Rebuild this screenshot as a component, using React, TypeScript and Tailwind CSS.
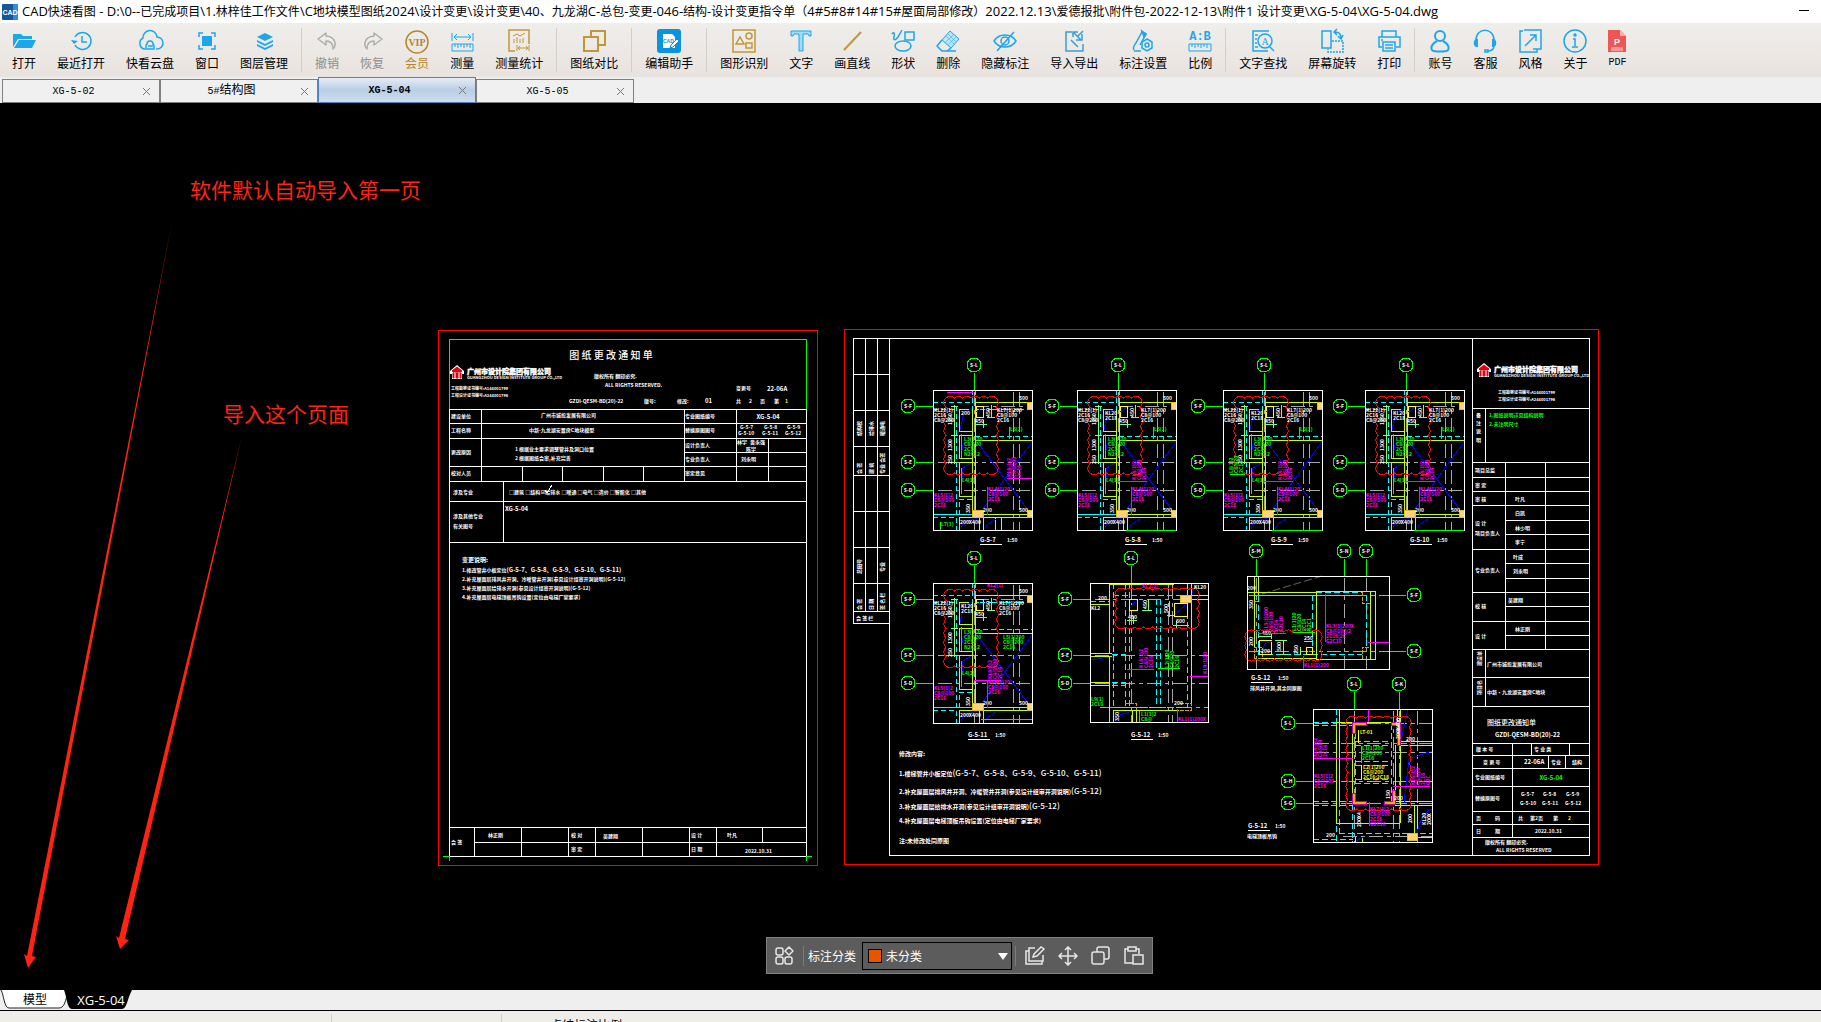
import React, { FC, ReactNode } from 'react'

const BLUE = '#1da6ea'
const GOLD = '#c0983a'

const RED = '#ff0000'
const GREEN = '#00ff00'
const CYAN = '#00ffff'
const LIME = '#c8ff00'
const YELLOW = '#ffff00'
const MAGENTA = '#ff00ff'
const GREY = '#a8a8a8'
const WHITE = '#ffffff'
const NAVY = '#0000ff'
const MINT = '#7dff7d'
const SAND = '#ffd37a'

/* ---------- toolbar icons ---------- */

const icons: Record<string, ReactNode> = {
  open: (
    <g fill={BLUE}>
      <path d="M1 6h8l2 2h9v3H6l-5 8z" />
      <path d="M7 12h17l-4 8H2z" />
    </g>
  ),
  recent: (
    <g fill="none" stroke={BLUE} strokeWidth="1.5">
      <path d="M6 9a8.500 8.500 0 1 1 0 8" />
      <path d="M13 8v6h5" />
      <path d="M2 12l3 4 4-3z" fill={BLUE} stroke="none" />
    </g>
  ),
  cloud: (
    <g fill="none" stroke={BLUE} strokeWidth="1.5">
      <path d="M7 21H6a6 6 0 0 1-1-11 7 7 0 0 1 14-1 6 6 0 0 1 0 12h-1" />
      <path d="M8 21v-3a2 2 0 0 1 1-2 3 3 0 0 1 6 0 2 2 0 0 1 1 2v3z" />
      <path d="M10 18h5" />
    </g>
  ),
  window: (
    <g>
      <rect x="7" y="8" width="10" height="10" fill={BLUE} />
      <path d="M4 9V5h4M16 5h4v4M20 17v4h-4M8 21H4v-4" fill="none" stroke={BLUE} strokeWidth="1.5" />
    </g>
  ),
  layers: (
    <g fill={BLUE}>
      <path d="M13 5l8 4-8 4-8-4z" />
      <path d="M5 12l8 4 8-4v2l-8 4-8-4z" />
      <path d="M5 16l8 4 8-4v2l-8 4-8-4z" />
    </g>
  ),
  undo: <path d="M11 5L3 11l8 6v-4c5 0 7 3 7 8 3-3 4-12-7-13z" fill="none" stroke="#aeaeae" strokeWidth="1.5" strokeLinejoin="round" />,
  redo: <path d="M14 5l8 6-8 6v-4c-5 0-7 3-7 8-3-3-4-12 7-13z" fill="none" stroke="#aeaeae" strokeWidth="1.5" strokeLinejoin="round" />,
  vip: (
    <g>
      <circle cx="12" cy="14" r="11" fill="none" stroke="#b8862c" strokeWidth="1.5" />
      <text x="12" y="18" textAnchor="middle" fontSize="10" fontWeight="700" fill="#b8862c" fontFamily="Liberation Serif, serif">
        VIP
      </text>
    </g>
  ),
  measure: (
    <g fill="none" stroke={BLUE}>
      <path d="M2 5v8M23 5v8M4 9h17M7 6L4 9l3 3M18 6l3 3-3 3" />
      <path d="M2 16h21v7H2zM5 16v3M8 16v4M11 16v3M14 16v4M17 16v3M20 16v4" />
    </g>
  ),
  stats: (
    <g fill="none" stroke={GOLD} strokeWidth="1.5">
      <path d="M8 23H2V2h20v14" />
      <path d="M6 8l4-2 3 2 5-3M7 15v-4M10 15v-6M13 15v-4M16 15v-5" strokeWidth="1" />
      <path d="M10 17v6M22 17v6M11 20h10M13 18l-2 2 2 2M19 18l2 2-2 2" strokeWidth="1" />
    </g>
  ),
  compare: (
    <g fill="none" stroke={GOLD} strokeWidth="2">
      <path d="M9 8V3h14v14h-6" />
      <path d="M2 9h14v14H2z" />
    </g>
  ),
  helper: (
    <g>
      <rect x="0" y="1" width="24" height="24" rx="3" fill="#0b93e0" />
      <path d="M6 6h9l3 3v11H6z" fill="#fff" />
      <text x="6" y="15" fontSize="5" fontWeight="700" fill="#0b93e0" fontFamily="Liberation Sans, sans-serif">
        CAD
      </text>
      <path d="M13 20l1-3 6-6 2 2-6 6z" fill="#fff" stroke="#0b93e0" />
    </g>
  ),
  detect: (
    <g fill="none" stroke={GOLD} strokeWidth="1.5">
      <path d="M1 2h22v22H1z" />
      <path d="M4 16l4-7 4 7z" />
      <circle cx="17" cy="8" r="3" />
      <path d="M14 15h6v5h-6z" />
    </g>
  ),
  text: <path d="M2 3h20v5h-2l-1-2h-5v17h-4V6H5L4 8H2z" fill="#9fdcf8" stroke={BLUE} />,
  line: <path d="M4 22L21 4" stroke={GOLD} strokeWidth="2" />,
  shape: (
    <g fill="none" stroke={BLUE} strokeWidth="1.5">
      <path d="M1 6c2-3 3 0 2 3s1 4 4 0l4-7M14 4h9v8h-9z" />
      <ellipse cx="12" cy="18" rx="8" ry="5" />
    </g>
  ),
  erase: (
    <g fill="none" stroke={BLUE} strokeLinejoin="round">
      <path d="M14 3l9 8-8 9-9-8z" fill="#bfe3f4" />
      <path d="M6 12l-5 6 5 5h5l4-3M6 23h14" strokeWidth="1.5" />
      <path d="M12 6l8 8M10 8l8 8M18 6l-9 9M20 9l-8 8" strokeWidth=".5" />
    </g>
  ),
  hide: (
    <g fill="none" stroke={BLUE} strokeWidth="1.5">
      <path d="M1 13c5-8 17-8 22 0-5 8-17 8-22 0z" />
      <circle cx="12" cy="13" r="4" />
      <path d="M21 4L4 23" />
    </g>
  ),
  transfer: (
    <g fill="none" stroke="#3b9fd3" strokeWidth="1.5">
      <path d="M10 4H4v19h17v-7" />
      <path d="M11 4l8 8M11 9V4h5M20 6v6h-6M9 12l7 7M21 3l-5 5" />
    </g>
  ),
  setting: (
    <g fill="none" stroke={BLUE} strokeWidth="1.5">
      <path d="M3 22c-2-3 1-5 3-9l5-9 4 2-6 11M3 23h7" />
      <path d="M11 3l4 3-2 3z" fill={BLUE} />
      <path d="M16 11l5 3v6l-5 3-5-3v-6z" />
      <circle cx="16" cy="17" r="2" />
    </g>
  ),
  scale: (
    <g>
      <text x="12" y="12" textAnchor="middle" fontSize="12" fontWeight="700" fill={BLUE} fontFamily="Liberation Mono, monospace">
        A:B
      </text>
      <path d="M1 16h22v7H1zM4 16v3M7 16v4M10 16v3M13 16v4M16 16v3M19 16v4" fill="none" stroke={BLUE} />
    </g>
  ),
  find: (
    <g fill="none" stroke={BLUE} strokeWidth="1.5">
      <path d="M17 23H2V3h16M4 7h3M4 11h2M4 15h2M4 19h3" />
      <circle cx="14" cy="13" r="7" />
      <path d="M18 18l5 5" />
      <text x="14" y="17" textAnchor="middle" fontSize="10" fill={BLUE} stroke="none" fontFamily="Liberation Serif, serif">
        A
      </text>
    </g>
  ),
  rotate: (
    <g fill="none" stroke={BLUE} strokeWidth="1.5">
      <path d="M2 3h9v17H2z" />
      <path d="M12 13h11v11H8v-3" strokeDasharray="2 1" />
      <path d="M15 4c4 0 6 2 6 6M17 1l-3 3 3 3M18 8l3 3 2-4" />
    </g>
  ),
  print: (
    <g fill="none" stroke={BLUE} strokeWidth="1.5">
      <path d="M5 9V3h14v6M5 19H2V9h21v10h-4" />
      <path d="M6 14h12v9H6zM8 17h8M8 20h8M4 12h2" />
    </g>
  ),
  user: (
    <g fill="none" stroke={BLUE} strokeWidth="2">
      <circle cx="12" cy="8" r="5" />
      <path d="M9 13c-4 2-7 6-5 9 1 2 15 2 16 0 2-3-1-7-5-9" />
    </g>
  ),
  service: (
    <g fill="none" stroke={BLUE} strokeWidth="1.5">
      <path d="M3 12C3-1 21-1 21 12M21 19c-1 3-3 4-6 4" />
      <path d="M5 11H3c-3 1-3 7 0 8h2zM19 11h2c3 1 3 7 0 8h-2z" fill={BLUE} stroke="none" />
      <path d="M12 22h3v2h-3z" />
    </g>
  ),
  style: (
    <g fill="none" stroke={BLUE} strokeWidth="1.5">
      <path d="M5 3H2v21h17v-3" />
      <path d="M6 2h17v19h-8M7 18L18 7M12 7h6v6" />
    </g>
  ),
  about: (
    <g fill="none" stroke={BLUE} strokeWidth="1.5">
      <circle cx="12" cy="13" r="11" />
      <path d="M10 11h2v7M9 19h6" />
      <circle cx="12" cy="7" r="1" fill={BLUE} />
    </g>
  ),
  pdf: (
    <g>
      <path d="M3 2h12l6 6v16H3z" fill="#ee5555" />
      <path d="M15 2l6 6h-6z" fill="#f8b4b0" />
      <path d="M6 19h12v4H6z" fill="#f39a96" />
      <text x="12" y="17" textAnchor="middle" fontSize="9" fontWeight="700" fill="#fff" fontFamily="Liberation Sans, sans-serif">
        P
      </text>
    </g>
  )
}

const toolGroups = [
  [
    ['open', '打开'],
    ['recent', '最近打开'],
    ['cloud', '快看云盘'],
    ['window', '窗口'],
    ['layers', '图层管理']
  ],
  [
    ['undo', '撤销'],
    ['redo', '恢复'],
    ['vip', '会员'],
    ['measure', '测量'],
    ['stats', '测量统计']
  ],
  [['compare', '图纸对比']],
  [['helper', '编辑助手']],
  [
    ['detect', '图形识别'],
    ['text', '文字'],
    ['line', '画直线'],
    ['shape', '形状'],
    ['erase', '删除'],
    ['hide', '隐藏标注'],
    ['transfer', '导入导出'],
    ['setting', '标注设置'],
    ['scale', '比例']
  ],
  [
    ['find', '文字查找'],
    ['rotate', '屏幕旋转'],
    ['print', '打印']
  ],
  [
    ['user', '账号'],
    ['service', '客服'],
    ['style', '风格'],
    ['about', '关于'],
    ['pdf', 'PDF']
  ]
]

const labelClass = (id: string) => {
  if (id === 'undo' || id === 'redo') return 'text-[12px] text-[#8e8e8e]'
  if (id === 'vip') return 'text-[12px] text-[#b8862c]'
  if (id === 'pdf') return "font-['Liberation_Mono',monospace] text-[10px] text-black"
  return 'text-[12px] text-black'
}

const windowTitle =
  'CAD快速看图 - D:\\0--已完成项目\\1.林梓佳工作文件\\C地块模型图纸2024\\设计变更\\设计变更\\40、九龙湖C-总包-变更-046-结构-设计变更指令单（4#5#8#14#15#屋面局部修改）2022.12.13\\爱德报批\\附件包-2022-12-13\\附件1 设计变更\\XG-5-04\\XG-5-04.dwg'

const TitleBar = () => (
  <header className="flex h-[23px] shrink-0 items-center bg-white pl-[2px] pr-3">
    <svg width="16" height="16" viewBox="0 0 16 16" className="mr-1 shrink-0">
      <rect width="16" height="16" rx="1" fill="#15579c" />
      <path d="M11 0h5v16h-5z" fill="#2f8be0" />
      <text x="8" y="11" textAnchor="middle" fontSize="7" fontWeight="700" fill="#fff" fontFamily="Liberation Sans, sans-serif">
        CAD
      </text>
    </svg>
    <h1 className="grow truncate font-['Open_Sans','Noto_Sans_CJK_SC',sans-serif] text-[12px] leading-5 text-black">
      {windowTitle.split(/([\x20-\x7e]+)/).map((part, i) =>
        i % 2 ? (
          <span key={i} className="text-[13px]">
            {part}
          </span>
        ) : (
          part
        )
      )}
    </h1>
    <button aria-label="最小化" className="flex h-4 w-[10px] items-center">
      <span className="mb-[3px] h-px w-full bg-black" />
    </button>
  </header>
)

const Toolbar = () => (
  <nav className="flex h-[54px] shrink-0 overflow-hidden bg-linear-to-b from-[#efeeeb] to-[#e9e3df]">
    {toolGroups.map((group, i) => (
      <div key={i} className="flex shrink-0 items-start">
        {i > 0 && <span className="mt-[5px] h-[44px] w-px bg-[#cfcfcf]" />}
        <div className={`flex gap-[21px] pr-[13px] pt-[5px] ${i === 0 ? 'pl-3' : 'pl-[13px]'}`}>
          {group.map(([id, label]) => (
            <button key={id} className={`flex flex-col items-center ${id === 'pdf' ? 'w-[18px]' : ''}`}>
              <svg width="24" height="26" viewBox="0 0 24 26" overflow="visible" className="shrink-0">
                {icons[id]}
              </svg>
              <span className={`mt-px whitespace-nowrap leading-4 ${labelClass(id)}`}>{label}</span>
            </button>
          ))}
        </div>
      </div>
    ))}
  </nav>
)

const docTabs = ['XG-5-02', '5#结构图', 'XG-5-04', 'XG-5-05']

const DocTabs = () => (
  <div className="flex h-[26px] shrink-0 items-end bg-[#efefef] pl-[2px] font-['Liberation_Mono','Noto_Sans_CJK_SC',monospace]">
    {docTabs.map((name) => {
      const active = name === 'XG-5-04'
      return (
        <div
          key={name}
          className={`flex w-[158px] items-center border pl-1 pr-[7px] ${
            active ? 'h-[26px] border-[#4f7fbf] bg-linear-to-b from-[#e6edf6] via-[#b9cde5] to-[#cfdded]' : 'h-6 border-[#808080] bg-[#f0f0f0]'
          }`}
        >
          <button className={`grow text-center text-[10px] leading-4 text-black ${active ? 'font-bold' : ''}`}>
            {name.split(/([\x20-\x7e]+)/).map((part, i) =>
              i % 2 ? (
                part
              ) : (
                <span key={i} className="text-[12px]">
                  {part}
                </span>
              )
            )}
          </button>
          <button aria-label={`关闭 ${name}`} className="flex h-3 w-3 items-center justify-center">
            <svg width="9" height="9" viewBox="0 0 9 9">
              <path d="M1 1l7 7M8 1l-7 7" stroke="#777" />
            </svg>
          </button>
        </div>
      )
    })}
  </div>
)

/* ---------- drawing primitives ---------- */

const P: FC<{ c: string; d: string; dash?: string; fill?: string }> = ({ c, d, dash, fill = 'none' }) => (
  <path d={d} stroke={c} strokeDasharray={dash} fill={fill} shapeRendering="crispEdges" />
)

const T: FC<{ x: number; y: number; s?: number; c?: string; mid?: boolean; w?: number; children: ReactNode }> = ({ x, y, s = 5, c = WHITE, mid, w = 700, children }) => (
  <text x={x} y={y} fontSize={s} fill={c} fontWeight={w} textAnchor={mid ? 'middle' : 'start'}>
    {children}
  </text>
)

// several stacked note lines, turned a quarter to the left when `up` is set
const Note: FC<{ x: number; y: number; c?: string; lines: string[]; up?: boolean; s?: number }> = ({ x, y, c = WHITE, lines, up, s = 5 }) => (
  <g transform={up ? `translate(${x} ${y}) rotate(-90)` : `translate(${x} ${y})`}>
    {lines.map((line, i) => (
      <text key={i} x="0" y={i * s} fontSize={s} fill={c} fontWeight="700">
        {line}
      </text>
    ))}
  </g>
)

const Axis: FC<{ x: number; y: number; to: 'down' | 'right' | 'left'; name: string }> = ({ x, y, to, name }) => {
  const stem = { down: `M${x} ${y + 8}v17`, right: `M${x + 8} ${y}h17`, left: `M${x - 8} ${y}h-17` }[to]
  return (
    <g>
      <circle cx={x} cy={y} r="7" fill="none" stroke={GREEN} shapeRendering="crispEdges" />
      <P c={GREEN} d={stem} />
      <T x={x} y={y + 2} mid>
        {name}
      </T>
    </g>
  )
}

const cloudPath = (x: number, y: number, w: number, h: number) => {
  const nx = Math.round(w / 9)
  const ny = Math.round(h / 9)
  const sx = w / nx
  const sy = h / ny
  const arc = (dx: number, dy: number) => `a6 6 0 0 1 ${dx} ${dy}`
  return `M${x} ${y}${arc(sx, 0).repeat(nx)}${arc(0, sy).repeat(ny)}${arc(-sx, 0).repeat(nx)}${arc(0, -sy).repeat(ny)}z`
}

const Cloud: FC<{ x: number; y: number; w: number; h: number }> = ({ x, y, w, h }) => <P c={RED} d={cloudPath(x, y, w, h)} />

const Caption: FC<{ x: number; y: number; name: string; sub?: string }> = ({ x, y, name, sub }) => (
  <g>
    <T x={x} y={y + 2} s={6}>
      {name}
    </T>
    <P c={WHITE} d={`M${x} ${y + 4}h22`} />
    <T x={x + 27} y={y + 2} s={5}>
      1:50
    </T>
    {sub && (
      <T x={x - 1} y={y + 12} s={5}>
        {sub}
      </T>
    )}
  </g>
)

const House: FC<{ x: number; y: number }> = ({ x, y }) => (
  <g transform={`translate(${x} ${y})`}>
    <path d="M0 6l7-6 7 6v3h-2v5H2V9H0z" fill="#fff" />
    <path d="M2 6l5-4 5 4-1 1H3zM3 8h1v5H3zM6 8h2v5H6zM10 8h1v5h-1z" fill="#e00010" stroke="#e00010" />
  </g>
)

const Company: FC<{ x: number; y: number }> = ({ x, y }) => (
  <g>
    <House x={x} y={y} />
    <text x={x + 17} y={y + 9} fontSize="7" fontWeight="900" fill={WHITE} stroke={WHITE} strokeWidth=".4">
      广州市设计院集团有限公司
    </text>
    <text x={x + 17} y={y + 14} fontSize="4" fontWeight="700" fill={WHITE}>
      GUANGZHOU DESIGN INSTITUTE GROUP CO.,LTD
    </text>
  </g>
)

/* ---------- sheet 1: change notice ---------- */

const NoticeSheet = () => (
  <g>
    <P c={RED} d="M438 330h379v535H438z" />
    <P c={WHITE} d="M449 409V856H806V409M449 409h357M449 423h357M449 438h357M684 452h122M449 466h357M449 481h357M449 501h357M449 542h357" />
    <P c={WHITE} d="M481 409v72M684 409v72M736 409v72M768 438v43M522 466v15M562 466v15M603 466v15M643 466v15M503 481v61" />
    <P c={WHITE} d="M449 827h357M474 842h332M474 827v29M521 827v29M568 827v29M595 827v29M642 827v29M689 827v29M716 827v29M762 827v15" />
    <P c={GREEN} d="M449 409V339H806V409M443 856h6v5M812 856h-6v5" />
    <T x={611} y={359} s={10} mid w={500}>
      图 纸 更 改 通 知 单
    </T>
    <Company x={450} y={365} />
    <T x={451} y={390} s={4}>工程勘察证书编号:A144001799</T>
    <T x={451} y={397} s={4}>工程设计证书编号:A244001796</T>
    <T x={594} y={378}>版权所有 翻印必究.</T>
    <T x={605} y={387} s={5}>ALL RIGHTS RESERVED.</T>
    <T x={569} y={403} s={5}>GZDI-QESM-BD(20)-22</T>
    <T x={644} y={403}>版号:</T>
    <T x={677} y={403}>修改:</T>
    <T x={705} y={403} s={6}>01</T>
    <T x={736} y={390}>变更号</T>
    <T x={767} y={391} s={6}>22-06A</T>
    <T x={736} y={403}>共</T>
    <T x={749} y={403}>2</T>
    <T x={760} y={403}>页</T>
    <T x={774} y={403}>第</T>
    <T x={785} y={403} c={YELLOW}>1</T>

    <T x={451} y={418}>建设单位</T>
    <T x={541} y={417}>广州市城投发展有限公司</T>
    <T x={685} y={418}>专业图纸编号</T>
    <T x={768} y={419} s={6} mid>XG-5-04</T>
    <T x={451} y={432}>工程名称</T>
    <T x={529} y={432}>中新-九龙湖安置房C地块模型</T>
    <T x={685} y={432}>替换原图图号</T>
    <T x={740} y={429}>G-5-7</T>
    <T x={764} y={429}>G-5-8</T>
    <T x={787} y={429}>G-5-9</T>
    <T x={738} y={435}>G-5-10</T>
    <T x={762} y={435}>G-5-11</T>
    <T x={785} y={435}>G-5-12</T>
    <T x={451} y={454}>更改原因</T>
    <T x={515} y={451}>1 根据业主要求调整管井及洞口位置</T>
    <T x={515} y={460}>2 根据图纸会审,补充完善</T>
    <T x={685} y={447}>设计负责人</T>
    <T x={737} y={444}>林宇</T>
    <T x={750} y={444}>黄永强</T>
    <T x={746} y={451}>陈宇</T>
    <T x={685} y={461}>专业负责人</T>
    <T x={741} y={461}>刘永明</T>
    <T x={451} y={475}>校对人员</T>
    <T x={685} y={475}>审定意见</T>
    <T x={453} y={494}>涉及专业</T>
    <T x={509} y={494}>□建筑 □结构 ☑给排水 □暖通 □电气 □造价 □智能化 □其他</T>
    <P c={WHITE} d="M545 490l2 3 5-8" />
    <T x={505} y={511} s={6}>XG-5-04</T>
    <T x={453} y={518}>涉及其他专业</T>
    <T x={453} y={528}>有关图号</T>

    <T x={462} y={562} s={6}>变更说明:</T>
    <T x={462} y={572}>
      1.修改管井小板定位<tspan fontSize="6">(G-5-7、G-5-8、G-5-9、G-5-10、G-5-11)</tspan>
    </T>
    <T x={462} y={581} s={5}>2.补充屋面层排风井开洞、冷暖管井开洞(参见设计组审开洞说明)(G-5-12)</T>
    <T x={462} y={590} s={5}>3.补充屋面层给排水开洞(参见设计组审开洞说明)(G-5-12)</T>
    <T x={462} y={599} s={5}>4.补充屋面层电梯顶板吊钩设置(定位由电梯厂家要求)</T>

    <T x={451} y={844}>会 签</T>
    <T x={488} y={837}>林正刚</T>
    <T x={571} y={837}>校 对</T>
    <T x={603} y={838}>吴建翔</T>
    <T x={571} y={851}>审 定</T>
    <T x={691} y={837}>设 计</T>
    <T x={727} y={837}>叶凡</T>
    <T x={691} y={851}>日 期</T>
    <T x={745} y={853}>2022.10.31</T>
  </g>
)

/* ---------- sheet 2: structural details ---------- */

const beam = ['KL3(1)200X', 'C8@100/2', '2C16;2C', 'G2C10']

const StairPlan: FC<{ x: number; y: number; kind: 7 | 8 | 9 | 10 | 11 }> = ({ x, y, kind }) => {
  const first = kind === 7
  const last = kind === 11
  return (
    <g transform={`translate(${x} ${y})`}>
      <Axis x={41} y={-25} to="down" name="S-L" />
      <Axis x={-25} y={16} to="right" name="S-F" />
      <Axis x={-25} y={72} to="right" name="S-E" />
      <Axis x={-25} y={100} to="right" name="S-D" />
      <P c={GREY} dash="14 4 4 4" d="M41 2v138M80 2v138M86 2v138M5 72h94M5 100h94M42 16h57M0 124h99" />
      <P c={CYAN} dash="5 3" d="M23 16v124M39 0v19M42 0v16M0 12h39M0 19h23M42 46h57M0 127h24M26 109h13v15H26z" />
      <P c={CYAN} d="M0 124h40" />
      {(first || last) && <P c={CYAN} dash="10 3" d="M42 19h57" />}
      <P c={LIME} d="M39 19v101M42 12v108M42 12h57M42 50h57M50 124h49M26 127h73M26 19h13v22H26zM26 45h13v23H26zM26 72h13v34H26zM26 127v13M46 127v13M50 127v13" />
      {first && <P c={LIME} d="M62 127v13M68 127v13" />}
      <P c={YELLOW} d="M43 16h7v11h-7z" />
      <P c={NAVY} d="M44 52l51 68M99 52l-49 67M27 40l4-18 8-3M28 66l2-12 9-6M28 98l2-20 8-5M43 22l7-5M28 139l2-6 14-5M52 139l3-5 8-5" />
      <Cloud x={13} y={8} w={50} h={75} />
      <P c={MINT} d="M21 15v59M18 16h7M18 45h7M18 72h7M42 34h12M50 30v8M58 15v13M54 27h8" />
      <P c="#e0c020" fill={SAND} d="M39 120h11v7H39zM94 12h5v7h-5zM94 120h5v7h-5z" />
      <Note x={1} y={22} lines={['KL21(1)', '2C16', 'C8@200']} />
      <Note x={28} y={25} lines={first ? ['200'] : ['KL20', '2C18']} />
      <Note x={last ? 66 : 64} y={22} lines={['KL7(1)200', 'C8@100', '2C16']} />
      <Note x={19} y={35} up lines={['1250']} />
      <Note x={19} y={61} up lines={['1300']} />
      <Note x={19} y={74} up lines={['250']} />
      <Note x={57} y={27} up lines={['450']} />
      <T x={42} y={33}>450</T>
      <T x={86} y={10}>500</T>
      <T x={86} y={122}>500</T>
      <T x={50} y={122}>200</T>
      <Note x={37} y={123} up lines={['350']} />
      <T x={27} y={134}>200X400</T>
      <Note x={31} y={51} c={GREEN} lines={['L3(1)20', 'C8@20', '2C14', 'N2C12']} />
      <Note x={29} y={92} c={GREEN} lines={['L4(1)']} />
      <P c={GREEN} d="M28 44v24M28 78v26" />
      {!last && (
        <g>
          <P c={GREEN} d="M76 37v12" />
          <Note x={77} y={41} c={GREEN} lines={['L6(1)']} />
        </g>
      )}
      {last && <Note x={70} y={56} c={GREEN} lines={['L5(1)200', 'C8@200', '2C16']} />}
      <Note x={55} y={101} c={MAGENTA} lines={['KL4(1)20', 'C8@100', '2C16']} />
      <Note x={1} y={107} c={MAGENTA} lines={['KL5(1)2', 'C8@100', '2C16']} />
      <P c={MAGENTA} d="M54 97v28" />
      {first ? (
        <g>
          <Note x={78} y={87} up c={MAGENTA} lines={['KL8(1)2', 'C8@100', '2C16']} />
          <P c={MAGENTA} d="M74 88h25M14 2h26" />
          <Note x={8} y={136} c={GREEN} lines={['L7(1)']} />
          <P c={GREEN} d="M7 132v8" />
        </g>
      ) : (
        <g>
          <Note x={59} y={last ? 96 : 90} up c={MAGENTA} lines={['KL8(1)2', 'C8@100', '2C16']} />
          <P c={MAGENTA} d={last ? 'M41 97h27' : 'M41 91h29'} />
        </g>
      )}
      {kind === 9 && (
        <g>
          <Note x={10} y={83} up c={GREEN} lines={['L8(1)2', 'C8@20', '2C14']} />
          <P c={GREEN} d="M7 84h15" />
        </g>
      )}
      {last && <Note x={54} y={4} c={MAGENTA} lines={['KL2(1)']} />}
      <P c={WHITE} d="M0 0h99v140H0z" />
      {!first && <P c={GREEN} d={last ? 'M48 136h51' : 'M49 140h50'} />}
    </g>
  )
}

const RoofPlan = () => (
  <g transform="translate(1090 583)">
    <Axis x={41} y={-25} to="down" name="S-L" />
    <Axis x={-25} y={16} to="right" name="S-F" />
    <Axis x={-25} y={72} to="right" name="S-E" />
    <Axis x={-25} y={100} to="right" name="S-D" />
    <P c={GREY} dash="14 4 4 4" d="M41 2v137M78 2v137M82 2v137M5 16h113M5 72h113M5 100h113M10 124h108" />
    <P c={CYAN} dash="6 3" d="M23 0v124M35 0v124M39 0v124M66 16v108M70 16v108M97 12v112M23 12h78M0 18h20M23 124h78M22 99h14M22 71h14M22 102h14" />
    <P c={LIME} d="M19 1h65M19 1v69M0 21h19M0 70h22M0 73h22M19 73v66M0 99h19M0 102h19M97 0v12M101 0v120M101 12h17M101 16h17M23 127h66M23 127v12M42 127v12M46 127v12" />
    <P c="#c8a800" dash="4 1" d="M35 120h11v7M90 120h11v7H90" />
    <P c={YELLOW} d="M39 16h8v11h-8zM84 20h13v13H84z" />
    <P c={NAVY} d="M40 25l7-8M85 31l12-10M1 77l18-3M26 138l4-6 12-4M102 10l4-8" />
    <Cloud x={27} y={7} w={80} h={37} />
    <P c={MINT} d="M37 37h10M43 33v8M52 27h10M58 16v12M79 18v16M77 32h7M83 42h16M86 38v7" />
    <P c="#e0c020" fill={SAND} d="M90 12h11v7H90z" />
    <T x={38} y={36}>450</T>
    <T x={86} y={40}>600</T>
    <T x={8} y={17}>200</T>
    <T x={1} y={27}>KL2</T>
    <T x={104} y={6}>KL20</T>
    <Note x={57} y={26} up lines={['450']} />
    <Note x={78} y={30} up lines={['500']} />
    <Note x={29} y={138} up lines={['350']} />
    <T x={84} y={122}>200</T>
    <Note x={53} y={85} up c={MAGENTA} lines={['KL6(1)2', 'C8@100', '2C16']} />
    <P c={MAGENTA} d="M37 86h27M100 93h18M87 126v13" />
    <Note x={79} y={85} up c={GREEN} lines={['L2(1)20', 'C8@20', '2C16']} />
    <P c={GREEN} d="M68 85h22M49 128v11" />
    <Note x={117} y={91} up c={MAGENTA} lines={['KL9(1)20']} />
    <Note x={88} y={138} c={MAGENTA} lines={['KL1(1)200X']} />
    <Note x={51} y={133} c={GREEN} lines={['L1(1)2', 'C8@']} />
    <Note x={1} y={118} c={GREEN} lines={['L9(1)', '2C16']} />
    <Note x={52} y={5} c={MAGENTA} lines={['KL2(1)']} />
    <P c={WHITE} d="M0 0h118v139H0z" />
  </g>
)

const ShaftPlan = () => (
  <g transform="translate(1247 576)">
    <Axis x={9} y={-25} to="down" name="S-M" />
    <Axis x={97} y={-25} to="down" name="S-N" />
    <Axis x={119} y={-25} to="down" name="S-P" />
    <Axis x={167} y={19} to="left" name="S-F" />
    <Axis x={167} y={75} to="left" name="S-E" />
    <P c={GREY} dash="14 4 4 4" d="M9 2v91M97 2v91M119 2v91M2 19h140M2 75h140" />
    <path d="M15 18L75 0" stroke="#666" strokeDasharray="8 3" />
    <P c={CYAN} d="M12 19h103" />
    <P c={CYAN} dash="6 3" d="M11 20v58M65 19v59M119 19v54M11 78h104M69 16h46" />
    <P c={LIME} d="M7 0v72M11 0v19M0 16h69M69 15h59v68H69zM123 16v67M15 82h54" />
    <P c="#c8a800" dash="4 1" d="M115 16v11h8M115 83V71h8M7 25h4M7 82V71h8v11z" />
    <P c={YELLOW} d="M12 64h12v14H12zM59 71h6v7h-6z" />
    <P c={NAVY} d="M15 75l3-7 7-3M60 77l5-5" />
    <Cloud x={0} y={56} w={73} h={27} />
    <P c={MINT} d="M11 60h14M24 57v6M28 64h12M36 64v14M33 78h8M57 65h9M53 71v8" />
    <T x={15} y={59}>450</T>
    <T x={14} y={77}>200</T>
    <T x={57} y={64}>250</T>
    <T x={0} y={14}>200</T>
    <Note x={6} y={33} up lines={['350']} />
    <Note x={6} y={70} up lines={['200']} />
    <Note x={34} y={75} up lines={['500']} />
    <Note x={51} y={78} up lines={['250']} />
    <Note x={21} y={56} up c={MAGENTA} lines={['KL3(1)200', 'C8@100', '2C16', 'G2C10']} />
    <Note x={49} y={55} up c={GREEN} lines={['L1(1)20', 'C8@20', '2C14', 'N2C1']} />
    <P c={MAGENTA} d="M11 57h28M78 18v48M121 66h21M56 80v13" />
    <P c={GREEN} d="M46 56h22" />
    <Note x={79} y={52} c={MAGENTA} lines={beam} />
    <Note x={57} y={91} c={MAGENTA} lines={['KL1(1)200']} />
    <P c={WHITE} d="M0 0h142v93H0z" />
  </g>
)

const CorePlan = () => (
  <g transform="translate(1313 709)">
    <Axis x={41} y={-25} to="down" name="S-L" />
    <Axis x={86} y={-25} to="down" name="S-K" />
    <Axis x={-25} y={14} to="right" name="S-L" />
    <Axis x={-25} y={72} to="right" name="S-H" />
    <Axis x={-25} y={94} to="right" name="S-G" />
    <P c={GREY} dash="14 4 4 4" d="M41 2v131M80 2v131M86 2v131M104 2v131M2 14h117M2 34h117M2 43h117M2 72h117M2 94h117M30 127h89" />
    <P c={CYAN} dash="6 3" d="M23 0v133M26 92v32M42 15v79M78 15v79M0 13h23M0 16h40M42 32h36M42 36h36M42 52h36M42 56h36M42 70h36M42 74h36M0 92h40M0 96h40M26 124h93M0 130h40M39 96v37" />
    <P c={LIME} d="M26 0v92M23 13h64M23 13v101M39 13v83M87 0v114M84 0v13M82 36v58M23 114h64M87 32h32M87 36h32M82 92h37M82 96h37M101 96v28M104 96v28M104 128h15M42 128v5M49 128v5" />
    <P c={NAVY} d="M95 0l-7 32M119 42l-23 8-5 44M104 125c2-12 6-22 15-25M43 132l7-4" />
    <Cloud x={35} y={9} w={61} h={91} />
    <P c="#c000c0" fill="#ffa800" d="M39 13h14v3H42v8h-3zM78 13h9v23h-3V16h-6zM39 84h3v8h11v3H39zM79 81h3v14H71v-3h8z" />
    <P c="#e0c020" fill={SAND} d="M94 124h10v7H94z" />
    <P c={YELLOW} d="M45 21v13M48 56v15" />
    <Note x={47} y={25} c={YELLOW} lines={['LT-01']} />
    <P c={GREEN} d="M48 37v17" />
    <Note x={49} y={41} c={GREEN} lines={['L1(1)200', 'C8@200', '2C16']} />
    <Note x={50} y={60} c={YELLOW} lines={['L2(1)200', 'C8@200', '2C16;2C18']} />
    <Note x={4} y={48} up c={MAGENTA} lines={['KL4(1)2', 'C8@10', '2C16']} />
    <Note x={1} y={69} c={MAGENTA} lines={['KL5(1)2', 'C8@100', '2C16']} />
    <Note x={102} y={76} up c={MAGENTA} lines={['KL6(1)2', 'C8@10', '2C16', 'G2C']} />
    <Note x={57} y={102} c={MAGENTA} lines={['KL7(1)2', 'C8@100', '2C16', 'G2C10']} />
    <P c={MAGENTA} d="M0 49h40M80 77h37M55 0v13M56 93v24" />
    <Note x={87} y={30} up lines={['200X400']} />
    <T x={93} y={32}>200</T>
    <T x={81} y={91}>200</T>
    <Note x={77} y={90} up lines={['150']} />
    <Note x={48} y={118} up lines={['200X4']} />
    <Note x={99} y={114} up lines={['200']} />
    <Note x={113} y={116} up lines={['KL20', '200X']} />
    <T x={13} y={128}>200</T>
    <P c={WHITE} d="M0 0h119v133H0z" />
  </g>
)

const noteLines = [
  { y: 776, cjk: '1.楼梯管井小板定位', latin: '(G-5-7、G-5-8、G-5-9、G-5-10、G-5-11)' },
  { y: 794, cjk: '2.补充屋面层排风井开洞、冷暖管井开洞(参见设计组审开洞说明)', latin: '(G-5-12)' },
  { y: 809, cjk: '3.补充屋面层给排水开洞(参见设计组审开洞说明)', latin: '(G-5-12)' },
  { y: 823, cjk: '4.补充屋面层电梯顶板吊钩设置(定位由电梯厂家要求)', latin: '' }
]

const TitleColumn = () => (
  <g>
    <P
      c={WHITE}
      d="M1472 338v517M1472 408h117M1472 462h117M1472 477h117M1472 491h117M1472 505h117M1505 520h84M1505 534h84M1472 549h117M1505 563h84M1505 578h84M1472 592h117M1505 606h84M1472 621h117M1505 635h84M1472 649h117M1472 677h117M1472 706h117M1472 743h117M1472 755h117M1472 768h117M1472 786h117M1472 811h117M1472 824h117M1472 837h117"
    />
    <P c={WHITE} d="M1485 408v54M1485 649v57M1505 462v187M1545 462v187M1512 743v94M1531 743v12M1569 743v12M1548 755v13M1565 755v13" />
    <Company x={1477} y={363} />
    <T x={1498} y={394} s={4}>工程勘察证书编号:A144001799</T>
    <T x={1498} y={401} s={4}>工程设计证书编号:A244001796</T>
    <T x={1476} y={417}>备</T>
    <T x={1476} y={425}>注</T>
    <T x={1476} y={433}>说</T>
    <T x={1476} y={442}>明</T>
    <T x={1489} y={417} c={GREEN}>1.图纸说明详见结构说明</T>
    <T x={1489} y={426} c={GREEN}>2.未注明尺寸</T>
    <T x={1475} y={472}>项目总监</T>
    <T x={1475} y={487}>审 定</T>
    <T x={1475} y={501}>审 核</T>
    <T x={1515} y={501}>叶凡</T>
    <T x={1515} y={515}>白凯</T>
    <T x={1475} y={525}>设 计</T>
    <T x={1475} y={535}>项目负责人</T>
    <T x={1515} y={530}>林少明</T>
    <T x={1515} y={544}>李宁</T>
    <T x={1475} y={572}>专业负责人</T>
    <T x={1513} y={559}>叶成</T>
    <T x={1513} y={573}>刘永明</T>
    <T x={1475} y={608}>校 核</T>
    <T x={1508} y={602}>吴建翔</T>
    <T x={1475} y={638}>设 计</T>
    <T x={1515} y={631}>林正刚</T>
    <Note x={1481} y={666} up lines={['建设单']} />
    <T x={1487} y={666}>广州市城投发展有限公司</T>
    <Note x={1481} y={695} up lines={['项目名']} />
    <T x={1487} y={694}>中新·九龙湖安置房C地块</T>
    <T x={1487} y={725} s={7} w={500}>图纸更改通知单</T>
    <T x={1495} y={737} s={6}>GZDI-QESM-BD(20)-22</T>
    <T x={1476} y={751}>版 本 号</T>
    <T x={1534} y={751}>专 业 类</T>
    <T x={1483} y={764}>变 更 号</T>
    <T x={1524} y={764} s={6}>22-06A</T>
    <T x={1551} y={764}>专业</T>
    <T x={1572} y={764}>结构</T>
    <T x={1475} y={779}>专业图纸编号</T>
    <T x={1551} y={780} s={6} c={GREEN} mid>XG-5-04</T>
    <T x={1475} y={800}>替换原图号</T>
    <T x={1521} y={796}>G-5-7</T>
    <T x={1543} y={796}>G-5-8</T>
    <T x={1566} y={796}>G-5-9</T>
    <T x={1520} y={805}>G-5-10</T>
    <T x={1542} y={805}>G-5-11</T>
    <T x={1565} y={805}>G-5-12</T>
    <T x={1476} y={820}>页</T>
    <T x={1495} y={820}>码</T>
    <T x={1518} y={820}>共</T>
    <T x={1530} y={820}>第2页</T>
    <T x={1553} y={820}>第</T>
    <T x={1568} y={820} c={YELLOW}>2</T>
    <T x={1476} y={833}>日</T>
    <T x={1495} y={833}>期</T>
    <T x={1535} y={833}>2022.10.31</T>
    <T x={1485} y={844}>版权所有 翻印必究.</T>
    <T x={1496} y={852}>ALL RIGHTS RESERVED</T>
  </g>
)

const DetailSheet = () => (
  <g>
    <P c={RED} d="M844 329h754v535H844z" />
    <P c={WHITE} d="M853 623V338H1589V855H889V338M865 338v273M877 338v273M853 374h36M853 410h36M853 446h36M853 475h36M853 511h36M853 547h36M853 583h36M853 611h36M853 623h36" />
    <Note x={861} y={436} up lines={['结构校']} />
    <Note x={873} y={436} up lines={['给排水']} />
    <Note x={884} y={436} up lines={['暖通电']} />
    <Note x={861} y={474} up lines={['会 签']} />
    <Note x={873} y={474} up lines={['建 筑']} />
    <Note x={884} y={474} up lines={['专业 会签']} />
    <Note x={861} y={574} up lines={['总图号']} />
    <Note x={884} y={572} up lines={['专业']} />
    <Note x={861} y={610} up lines={['会 签']} />
    <Note x={873} y={610} up lines={['日 期']} />
    <Note x={884} y={610} up lines={['签 名 栏']} />
    <T x={856} y={620}>会 签 栏</T>

    <StairPlan x={933} y={390} kind={7} />
    <StairPlan x={1077} y={390} kind={8} />
    <StairPlan x={1223} y={390} kind={9} />
    <StairPlan x={1365} y={390} kind={10} />
    <StairPlan x={933} y={583} kind={11} />
    <RoofPlan />
    <ShaftPlan />
    <CorePlan />

    <Caption x={980} y={540} name="G-5-7" />
    <Caption x={1125} y={540} name="G-5-8" />
    <Caption x={1271} y={540} name="G-5-9" />
    <Caption x={1410} y={540} name="G-5-10" />
    <Caption x={968} y={735} name="G-5-11" />
    <Caption x={1131} y={735} name="G-5-12" />
    <Caption x={1251} y={678} name="G-5-12" sub="排风井开洞,其余同原图" />
    <Caption x={1248} y={826} name="G-5-12" sub="电梯顶板吊钩" />

    <T x={899} y={756} s={6}>修改内容:</T>
    {noteLines.map((n) => (
      <text key={n.y} x="899" y={n.y} fontSize="6" fontWeight="700" fill={WHITE}>
        {n.cjk}
        <tspan fontSize="8" fontWeight="500">
          {n.latin}
        </tspan>
      </text>
    ))}
    <T x={899} y={843} s={6}>注:未修改处同原图</T>
    <TitleColumn />
  </g>
)

const Annotations = () => (
  <g fill="#ff2312" fontSize="21">
    <text x="190" y="198">
      软件默认自动导入第一页
    </text>
    <text x="223" y="422">
      导入这个页面
    </text>
    <path d="M172 222L32 956l4 1-8 11-4-14 3 2z" />
    <path d="M242 436L125 939l4 1-9 9-4-13 3 2z" />
  </g>
)

const FloatingBar = () => (
  <div className="absolute bottom-4 left-[766px] flex h-[37px] w-[387px] items-center border border-[#828282] bg-[#5c5c5c] pl-2 text-[12px] text-white">
    <button aria-label="分类">
      <svg width="20" height="20" viewBox="0 0 20 20" fill="none" stroke="#e6e6e6" strokeWidth="1.5">
        <rect x="1" y="2" width="7" height="7" rx="2" />
        <rect x="1" y="11" width="7" height="7" rx="2" />
        <rect x="10" y="11" width="7" height="7" rx="2" />
        <path d="M14 1l4 4-4 4-4-4z" strokeLinejoin="round" />
      </svg>
    </button>
    <span className="ml-2 h-5 w-px bg-[#7c7c7c]" />
    <label htmlFor="category" className="ml-1 whitespace-nowrap">
      标注分类
    </label>
    <div className="relative ml-[6px]">
      <select id="category" className="block h-7 w-[150px] appearance-none border border-black bg-[#5c5c5c] pl-[23px] text-[12px] text-white">
        <option>未分类</option>
      </select>
      <span className="pointer-events-none absolute left-[6px] top-[7px] h-[14px] w-[14px] border border-black bg-[#e85400]" />
      <svg className="pointer-events-none absolute right-1 top-[11px]" width="10" height="7" viewBox="0 0 10 7">
        <path d="M0 0h10L5 7z" fill="#fff" />
      </svg>
    </div>
    <span className="ml-[3px] h-5 w-px bg-[#7c7c7c]" />
    <div className="ml-[9px] flex gap-[13px]">
      <button aria-label="编辑">
        <svg width="20" height="20" viewBox="0 0 20 20" fill="none" stroke="#e6e6e6" strokeWidth="1.5">
          <path d="M4 5H1v13h16v-3M10 2H4v13h14V9" />
          <path d="M9 8l7-7 3 2-7 7-4 1z" />
        </svg>
      </button>
      <button aria-label="移动">
        <svg width="20" height="20" viewBox="0 0 20 20" fill="none" stroke="#e6e6e6" strokeWidth="1.5">
          <path d="M10 2v16M2 10h16M7 4l3-3 3 3M7 16l3 3 3-3M4 7l-3 3 3 3M16 7l3 3-3 3" />
        </svg>
      </button>
      <button aria-label="复制">
        <svg width="20" height="20" viewBox="0 0 20 20" fill="none" stroke="#e6e6e6" strokeWidth="1.5">
          <rect x="1" y="6" width="12" height="12" rx="2" />
          <path d="M6 6V3a2 2 0 0 1 2-2h8a2 2 0 0 1 2 2v8a2 2 0 0 1-2 2h-3" />
        </svg>
      </button>
      <button aria-label="粘贴">
        <svg width="20" height="20" viewBox="0 0 20 20" fill="none" stroke="#e6e6e6" strokeWidth="1.5">
          <path d="M9 17H1V3h3M12 3h3v5M4 1h8v4H4z" />
          <path d="M9 9h10v9H9z" />
        </svg>
      </button>
    </div>
  </div>
)

const LayoutTabs = () => (
  <div className="flex h-5 shrink-0 items-start bg-[#efefef] font-['Open_Sans','Noto_Sans_CJK_SC',sans-serif] leading-[18px]">
    <button className="relative h-[19px] w-[66px] text-[12px] text-black">
      <svg className="absolute left-0 top-0" width="68" height="19" viewBox="0 0 68 19">
        <path d="M1 0c3 5 3 18 8 18h50c5 0 7-10 8-18z" fill="#fff" />
        <path d="M1 0c3 5 3 18 8 18h50c5 0 6-6 8-12" fill="none" stroke="#222" />
      </svg>
      <span className="relative pl-1">模型</span>
    </button>
    <button className="relative h-[19px] w-[66px] text-[13px] text-white">
      <svg className="absolute left-[-3px] top-0" width="69" height="19" viewBox="0 0 69 19">
        <path d="M1 0c3 8 3 19 8 19h50c5 0 5-10 10-19z" fill="#000" />
      </svg>
      <span className="relative pl-1">XG-5-04</span>
    </button>
  </div>
)

const App: FC = () => (
  <div className="flex h-screen flex-col overflow-hidden bg-black font-['Noto_Sans_CJK_SC',sans-serif]">
    <TitleBar />
    <Toolbar />
    <DocTabs />
    <main className="relative min-h-0 grow bg-black">
      <svg className="block h-full w-full" viewBox="0 103 1821 887" fontFamily="Noto Sans CJK SC, sans-serif">
        <NoticeSheet />
        <DetailSheet />
        <Annotations />
      </svg>
      <FloatingBar />
    </main>
    <LayoutTabs />
    <footer className="flex h-3 shrink-0 overflow-hidden border-t border-black bg-[#eeede9] text-[12px] leading-4">
      <span className="mt-[3px] h-4 w-[332px] shrink-0 border-r border-[#cfcfcf]" />
      <span className="mt-[3px] h-4 w-[170px] shrink-0 border-r border-[#cfcfcf]" />
      <span className="ml-12 mt-[6px] whitespace-nowrap text-black">点结标注比例</span>
    </footer>
  </div>
)

export default App
